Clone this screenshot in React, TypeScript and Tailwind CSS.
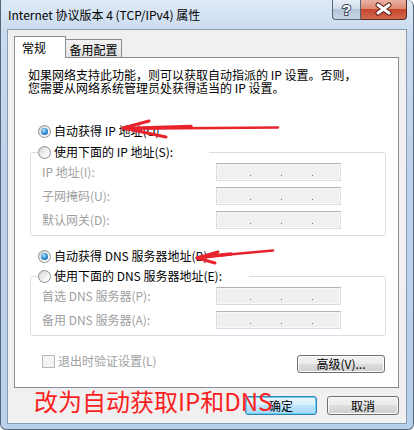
import React from 'react';

// Win7 style radio
const Radio: React.FC<{ checked?: boolean }> = ({ checked }) => (
  <span className="flex h-[13px] w-[13px] shrink-0 items-center justify-center rounded-full border border-[#8e8f8f] bg-[linear-gradient(135deg,#cfd1d4,#f4f4f4_60%,#ffffff)]">
    {checked && (
      <span className="h-[7px] w-[7px] rounded-full bg-[radial-gradient(circle_at_40%_35%,#b6e6fc,#2a86cf_55%,#0d4a86)]" />
    )}
  </span>
);

const IpBox: React.FC = () => (
  <div className="flex h-[18px] w-[125px] items-end gap-[30px] border border-[#dadde3] border-t-[#b1b3b8] bg-[#f0f0f0] pb-[4px] pl-[33px] shadow-[inset_0_0_0_1px_#f8f8f8]">
    <span className="h-px w-px bg-[#6d6d6d]" />
    <span className="h-px w-px bg-[#6d6d6d]" />
    <span className="h-px w-px bg-[#6d6d6d]" />
  </div>
);

const btnBase =
  'flex items-center justify-center rounded-[3px] border text-[12px] leading-[14px]';
const btnNormal =
  'border-[#707070] bg-[linear-gradient(180deg,#f2f2f2_0%,#ebebeb_49%,#dddddd_50%,#cfcfcf_100%)] shadow-[inset_0_0_0_1px_#fbfbfb]';
const btnDefault =
  'border-[#3c7fb1] bg-[linear-gradient(180deg,#eaf6fd_0%,#d9f0fc_49%,#bee6fd_50%,#a7d9f5_100%)] shadow-[inset_0_0_0_1px_#5fd0f5]';

interface FieldRow {
  label: string;
}

const Group: React.FC<{ legend: string; legendWidth: string; rows: FieldRow[] }> = ({
  legend,
  legendWidth,
  rows,
}) => (
  <fieldset className="ml-[15px] mr-[12px] rounded-[3px] border border-[#d5dfe5] px-[7px] pb-[6px]">
    <legend className={`flex h-[14px] items-center gap-[3px] ${legendWidth}`}>
      <Radio />
      <span>{legend}</span>
    </legend>
    <div className="grid grid-cols-[174px_125px] items-center gap-y-[6px] pl-[4px] pt-[4px] text-[#a0a0a0]">
      {rows.map((r) => (
        <React.Fragment key={r.label}>
          <span>{r.label}</span>
          <IpBox />
        </React.Fragment>
      ))}
    </div>
  </fieldset>
);

export default function App() {
  return (
    <div className="relative h-[430px] w-[414px] overflow-hidden rounded-b-[6px] rounded-tr-[6px] border-x border-b border-[#56667a] bg-[linear-gradient(180deg,#dde9f6_0%,#c9dbef_8%,#bcd2ea_40%,#b9d0e9_100%)] font-['Noto_Sans_CJK_SC','Noto_Sans',sans-serif] text-[12px] leading-[14px] text-black">
      {/* title bar */}
      <div className="flex h-[29px] items-start justify-between pl-[7px] pr-[6px]">
        <div className="pt-[7px] text-[12px] leading-[15px]">Internet 协议版本 4 (TCP/IPv4) 属性</div>
        <div className="flex">
          <div className="h-[20px] w-[29px] rounded-bl-[4px] border border-t-0 border-[#566477] bg-[linear-gradient(180deg,#e6eef7_0%,#d0dcea_45%,#b4c5d9_50%,#c6d6e8_100%)]">
            <svg width="27" height="19" viewBox="0 0 27 19">
              <text
                x="13.5"
                y="15"
                textAnchor="middle"
                fontSize="15"
                fontWeight="bold"
                fontFamily="Liberation Sans, sans-serif"
                fill="#ffffff"
                stroke="#3e4b5c"
                strokeWidth="2"
                paintOrder="stroke"
              >
                ?
              </text>
            </svg>
          </div>
          <div className="h-[20px] w-[46px] rounded-br-[4px] border border-l-0 border-t-0 border-[#5b2a22] bg-[linear-gradient(180deg,#eab2a4_0%,#dd8a74_45%,#c7472c_50%,#d0694c_100%)]">
            <svg width="45" height="19" viewBox="0 0 45 19">
              <path d="M17 5 L28 13 M28 5 L17 13" stroke="#5a1f16" strokeWidth="5" strokeLinecap="round" />
              <path d="M17 5 L28 13 M28 5 L17 13" stroke="#ffffff" strokeWidth="3" strokeLinecap="round" />
            </svg>
          </div>
        </div>
      </div>

      {/* client area */}
      <div className="mx-[6px] flex h-[395px] flex-col border border-[#8a9bb0] bg-[#f0f0f0] pl-[6px] pr-[7px] pt-[6px]">
        {/* tabs */}
        <div className="flex h-[21px] items-end">
          <div className="relative z-10 -mb-px flex h-[22px] w-[52px] justify-start border-x border-t border-[#898c95] bg-white pl-[7px] pt-[4px]">
            常规
          </div>
          <div className="flex h-[18px] w-[56px] justify-center border-r border-t border-[#898c95] bg-[linear-gradient(180deg,#f3f3f3,#e3e3e3)] pt-[3px]">
            备用配置
          </div>
        </div>

        {/* tab page */}
        <div className="flex h-[331px] flex-col border border-[#898c95] bg-white">
          <p className="pl-[13px] pt-[10px] leading-[13px]">
            如果网络支持此功能，则可以获取自动指派的 IP 设置。否则，
            <br />
            您需要从网络系统管理员处获得适当的 IP 设置。
          </p>

          <div className="mt-[30px] flex h-[14px] items-center gap-[3px] pl-[23px]">
            <Radio checked />
            <span>自动获得 IP 地址(O)</span>
          </div>

          <div className="mt-[7px]">
            <Group
              legend="使用下面的 IP 地址(S):"
              legendWidth="w-[171px]"
              rows={[{ label: 'IP 地址(I):' }, { label: '子网掩码(U):' }, { label: '默认网关(D):' }]}
            />
          </div>

          <div className="mt-[13px] flex h-[14px] items-center gap-[3px] pl-[23px]">
            <Radio checked />
            <span>自动获得 DNS 服务器地址(B)</span>
          </div>

          <div className="mt-[6px]">
            <Group
              legend="使用下面的 DNS 服务器地址(E):"
              legendWidth="w-[211px]"
              rows={[{ label: '首选 DNS 服务器(P):' }, { label: '备用 DNS 服务器(A):' }]}
            />
          </div>

          <div className="mt-[18px] flex items-start justify-between pl-[27px] pr-[13px]">
            <div className="flex h-[14px] items-center gap-[3px] text-[#a0a0a0]">
              <span className="h-[13px] w-[13px] border border-[#b8b8b8] bg-[#f4f4f4]" />
              <span>退出时验证设置(L)</span>
            </div>
            <button className={`${btnBase} ${btnNormal} mt-px h-[18px] w-[88px]`}>高级(V)...</button>
          </div>
        </div>

        {/* dialog buttons */}
        <div className="mt-[8px] flex justify-end gap-[10px]">
          <button className={`${btnBase} ${btnDefault} h-[19px] w-[72px]`}>确定</button>
          <button className={`${btnBase} ${btnNormal} h-[19px] w-[72px]`}>取消</button>
        </div>
      </div>

      {/* red annotation text */}
      <div className="pointer-events-none absolute left-[33px] top-[389px] text-[24px] leading-[24px] text-[#fb1f1f]">
        改为自动获取IP和DNS
      </div>

      {/* red hand-drawn arrows */}
      <svg className="pointer-events-none absolute left-0 top-0" width="414" height="430" viewBox="0 0 414 430">
        <g stroke="#e8232b" strokeLinecap="round" strokeLinejoin="round" fill="none">
          <path d="M277 127.5 L150 128.5 L122 128" strokeWidth="2.5" />
          <path d="M190 126.5 L125 128.5" strokeWidth="3.5" />
          <path d="M122 128 L148 121" strokeWidth="3" />
          <path d="M122 128 L165 137" strokeWidth="3" />
          <path d="M272 250.5 L200 257 L196 258" strokeWidth="2.5" />
          <path d="M230 254 L198 257.5" strokeWidth="3.5" />
          <path d="M196 258 L217 252" strokeWidth="3" />
          <path d="M196 258 L214 263" strokeWidth="3" />
        </g>
      </svg>
    </div>
  );
}
